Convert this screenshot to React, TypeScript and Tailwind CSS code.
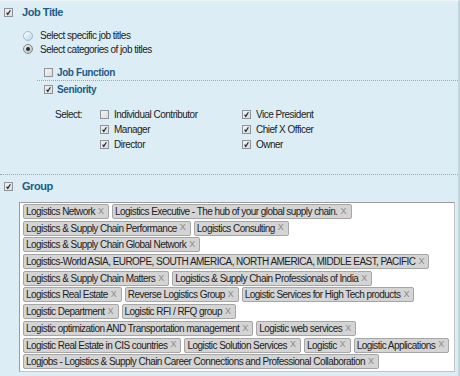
import React from "react";

const font = { fontFamily: '"Liberation Sans", Arial, sans-serif' };

const groups: string[] = [
  "Logistics Network",
  "Logistics Executive - The hub of your global supply chain.",
  "Logistics & Supply Chain Performance",
  "Logistics Consulting",
  "Logistics & Supply Chain Global Network",
  "Logistics-World ASIA, EUROPE, SOUTH AMERICA, NORTH AMERICA, MIDDLE EAST, PACIFIC",
  "Logistics & Supply Chain Matters",
  "Logistics & Supply Chain Professionals of India",
  "Logistics Real Estate",
  "Reverse Logistics Group",
  "Logistic Services for High Tech products",
  "Logistic Department",
  "Logistic RFI / RFQ group",
  "Logistic optimization AND Transportation management",
  "Logistic web services",
  "Logistic Real Estate in CIS countries",
  "Logistic Solution Services",
  "Logistic",
  "Logistic Applications",
  "Logjobs - Logistics & Supply Chain Career Connections and Professional Collaboration",
];

// group the tags into the rows seen in the picture
const rows: number[][] = [
  [0, 1],
  [2, 3],
  [4],
  [5],
  [6, 7],
  [8, 9, 10],
  [11, 12],
  [13, 14],
  [15, 16, 17, 18],
  [19],
];

const Check = ({ checked }: { checked?: boolean }) => (
  <span className="inline-flex w-[9px] h-[9px] shrink-0 border border-[#8f9499] bg-gradient-to-br from-[#f4f4f4] to-[#dcdcdc] items-center justify-center">
    {checked && (
      <svg width="7" height="7" viewBox="0 0 7 7">
        <path d="M1.6 3.6 L2.8 5.4 L5.4 1.2" fill="none" stroke="#1d2a3a" strokeWidth="1.2" />
      </svg>
    )}
  </span>
);

const Radio = ({ checked }: { checked?: boolean }) => (
  <span
    className={`inline-flex w-[10px] h-[10px] shrink-0 rounded-full border items-center justify-center ${
      checked
        ? "border-[#7d8790] bg-gradient-to-br from-[#f2f2f2] to-[#b9bec4]"
        : "border-[#9fbcd3] bg-gradient-to-br from-[#ffffff] to-[#b8d6ec]"
    }`}
  >
    {checked && <span className="w-[4px] h-[4px] rounded-full bg-[#2a2f36]" />}
  </span>
);

const Tag = ({ label }: { label: string }) => (
  <span className="inline-flex items-center h-[15px] pl-[2px] pr-[4px] border border-[#a6a6a6] rounded-[2px] bg-[#d4d4d4] text-[10px] tracking-[-0.55px] text-[#222] whitespace-nowrap">
    {label}
    <span className="ml-[3px] text-[#8a8a8a] tracking-normal text-[9px]">X</span>
  </span>
);

export default function App() {
  return (
    <div
      style={font}
      className="w-[460px] h-[376px] overflow-hidden bg-[#dcedf5] border-r-2 border-[#c3d6de] border-t border-t-[#eef6fa] text-[#222]"
    >
      {/* JOB TITLE */}
      <div className="border-b border-dotted border-[#9aa9b0] pb-[22px]">
        <div className="flex items-center h-[14px] mt-[4px] pl-[4px] gap-[9px]">
          <Check checked />
          <span className="text-[11px] font-bold tracking-[-0.45px] text-[#1d5c88]">Job Title</span>
        </div>

        <div className="mt-[9px] pl-[23px] text-[10px] tracking-[-0.5px]">
          <div className="flex items-center h-[14px] gap-[7px]">
            <span className="mt-[5px]">
              <Radio />
            </span>
            <span>Select specific job titles</span>
          </div>
          <div className="flex items-center h-[14px] gap-[7px]">
            <Radio checked />
            <span>Select categories of job titles</span>
          </div>
        </div>

        <div className="ml-[37px] mt-[9px]">
          <div className="flex items-center h-[16px] pl-[7px] gap-[4px] border-b border-dotted border-[#9aa9b0]">
            <Check />
            <span className="text-[10px] font-bold tracking-[-0.4px] text-[#1d5c88]">Job Function</span>
          </div>
          <div className="flex items-center h-[16px] pl-[7px] gap-[4px]">
            <Check checked />
            <span className="text-[10px] font-bold tracking-[-0.4px] text-[#1d5c88]">Seniority</span>
          </div>

          <div className="flex mt-[10px] pl-[18px] text-[10px] tracking-[-0.5px]">
            <div className="w-[45px] h-[15px] flex items-center">Select:</div>
            <div className="w-[142px]">
              {[
                ["Individual Contributor", false],
                ["Manager", true],
                ["Director", true],
              ].map(([t, c]) => (
                <div key={t as string} className="flex items-center h-[15px] gap-[5px]">
                  <Check checked={c as boolean} />
                  <span>{t as string}</span>
                </div>
              ))}
            </div>
            <div>
              {["Vice President", "Chief X Officer", "Owner"].map((t) => (
                <div key={t} className="flex items-center h-[15px] gap-[5px]">
                  <Check checked />
                  <span>{t}</span>
                </div>
              ))}
            </div>
          </div>
        </div>
      </div>

      {/* GROUP */}
      <div className="flex items-center h-[14px] mt-[4px] pl-[4px] gap-[9px]">
        <Check checked />
        <span className="text-[11px] font-bold tracking-[-0.45px] text-[#1d5c88]">Group</span>
      </div>

      <div className="ml-[19px] mt-[9px] w-[436px] h-[170px] bg-white border border-t-[#9c9c9c] border-l-[#9c9c9c] border-r-[#c4c4c4] border-b-[#c4c4c4] pt-[1px] pl-[3px] flex flex-col gap-[1.7px]">
        {rows.map((r, i) => (
          <div key={i} className="flex gap-[3px]">
            {r.map((j) => (
              <Tag key={j} label={groups[j]} />
            ))}
          </div>
        ))}
      </div>
    </div>
  );
}
